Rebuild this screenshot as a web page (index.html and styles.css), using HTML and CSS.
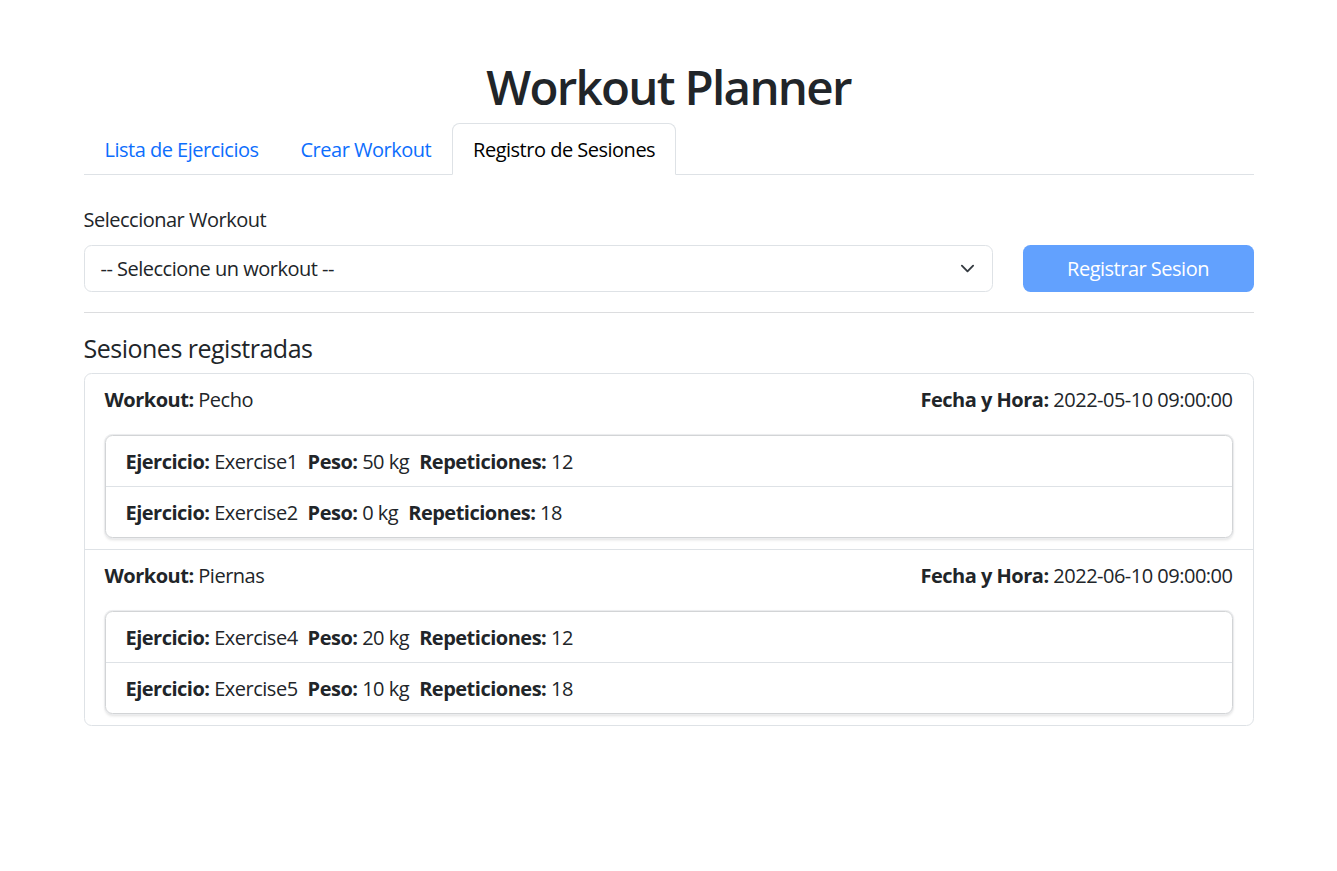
FILE: index.html
```html
<!DOCTYPE html>
<html lang="es">
<head>
<meta charset="utf-8">
<title>Workout Planner</title>
<link rel="stylesheet" href="styles.css">
</head>
<body>
<div class="container">
  <h1 class="title">Workout Planner</h1>
  <ul class="tabs">
    <li><a class="tab">Lista de Ejercicios</a></li>
    <li><a class="tab">Crear Workout</a></li>
    <li><a class="tab active">Registro de Sesiones</a></li>
  </ul>
  <div class="tab-content">
    <label class="label">Seleccionar Workout</label>
    <div class="select-row">
      <div class="select">
        <span>-- Seleccione un workout --</span>
        <svg class="chevron" viewBox="0 0 16 16" width="15" height="15"><path d="m2 5 6 6 6-6" fill="none" stroke="#343a40" stroke-width="2" stroke-linecap="round" stroke-linejoin="round"/></svg>
      </div>
      <div class="btn">Registrar Sesion</div>
    </div>
    <hr class="sep">
    <h5 class="heading">Sesiones registradas</h5>
    <div class="card">
      <div class="session">
        <div class="session-head">
          <div><strong>Workout:</strong> Pecho</div>
          <div><strong>Fecha y Hora:</strong> 2022-05-10 09:00:00</div>
        </div>
        <div class="exlist">
          <div class="ex"><span class="f"><strong>Ejercicio:</strong> Exercise1</span><span class="f"><strong>Peso:</strong> 50 kg</span><span class="f"><strong>Repeticiones:</strong> 12</span></div>
          <div class="ex"><span class="f"><strong>Ejercicio:</strong> Exercise2</span><span class="f"><strong>Peso:</strong> 0 kg</span><span class="f"><strong>Repeticiones:</strong> 18</span></div>
        </div>
      </div>
      <div class="session">
        <div class="session-head">
          <div><strong>Workout:</strong> Piernas</div>
          <div><strong>Fecha y Hora:</strong> 2022-06-10 09:00:00</div>
        </div>
        <div class="exlist">
          <div class="ex"><span class="f"><strong>Ejercicio:</strong> Exercise4</span><span class="f"><strong>Peso:</strong> 20 kg</span><span class="f"><strong>Repeticiones:</strong> 12</span></div>
          <div class="ex"><span class="f"><strong>Ejercicio:</strong> Exercise5</span><span class="f"><strong>Peso:</strong> 10 kg</span><span class="f"><strong>Repeticiones:</strong> 18</span></div>
        </div>
      </div>
    </div>
  </div>
</div>
</body>
</html>
```
FILE: styles.css
```css
* { box-sizing: border-box; }
body {
  margin: 0;
  font-family: "Open Sans", "Noto Sans", sans-serif;
  font-size: 20px;
  line-height: 1.5;
  letter-spacing: -0.5px;
  color: #212529;
  background: #fff;
}
.container {
  width: 1170px;
  margin: 0 auto;
}
.title {
  font-size: 47.5px;
  font-weight: 600;
  letter-spacing: -1.7px;
  line-height: 1.2;
  text-align: center;
  margin: 58px 0 8px;
}
.tabs {
  display: flex;
  list-style: none;
  margin: 0;
  padding: 0;
  border-bottom: 1px solid #dee2e6;
}
.tab {
  display: block;
  padding: 11px 20px 9px;
  line-height: 30px;
  margin-bottom: -1px;
  border: 1px solid transparent;
  border-top-left-radius: 7.5px;
  border-top-right-radius: 7.5px;
  color: #0d6efd;
  cursor: pointer;
}
.tab.active {
  color: #000;
  background: #fff;
  border-color: #dee2e6 #dee2e6 #fff;
}
.tab-content {
  padding-top: 30px;
}
.label {
  display: block;
  margin-bottom: 10px;
}
.select-row {
  display: flex;
  gap: 30px;
}
.select {
  flex: 1;
  display: flex;
  align-items: center;
  justify-content: space-between;
  height: 47px;
  padding: 7.5px 17px 7.5px 16px;
  border: 1px solid #dee2e6;
  border-radius: 7.5px;
}
.chevron { display: block; }
.btn {
  width: 231px;
  height: 47px;
  display: flex;
  align-items: center;
  justify-content: center;
  background: rgb(98, 161, 254);
  color: #fff;
  border-radius: 7.5px;
}
.sep {
  margin: 20px 0;
  border: 0;
  border-top: 1px solid #dcdddf;
}
.heading {
  font-size: 25px;
  font-weight: 500;
  line-height: 30px;
  margin: 0 0 10px;
}
.card {
  border: 1px solid #dee2e6;
  border-radius: 7.5px;
}
.session {
  padding: 11px 20px;
}
.session + .session {
  border-top: 1px solid #dee2e6;
}
.session-head {
  display: flex;
  justify-content: space-between;
  line-height: 30px;
}
.exlist {
  margin-top: 20px;
  border: 1px solid #d2d4d6;
  border-radius: 7.5px;
  box-shadow: 0 0 0 1px #ebecee, 0 1.5px 3px rgba(0, 0, 0, 0.12);
}
.ex {
  padding: 11px 20px 9px;
  line-height: 30px;
}
.ex + .ex {
  border-top: 1px solid #dee2e6;
}
.f { margin-right: 10px; }
strong { font-weight: 700; }
```
